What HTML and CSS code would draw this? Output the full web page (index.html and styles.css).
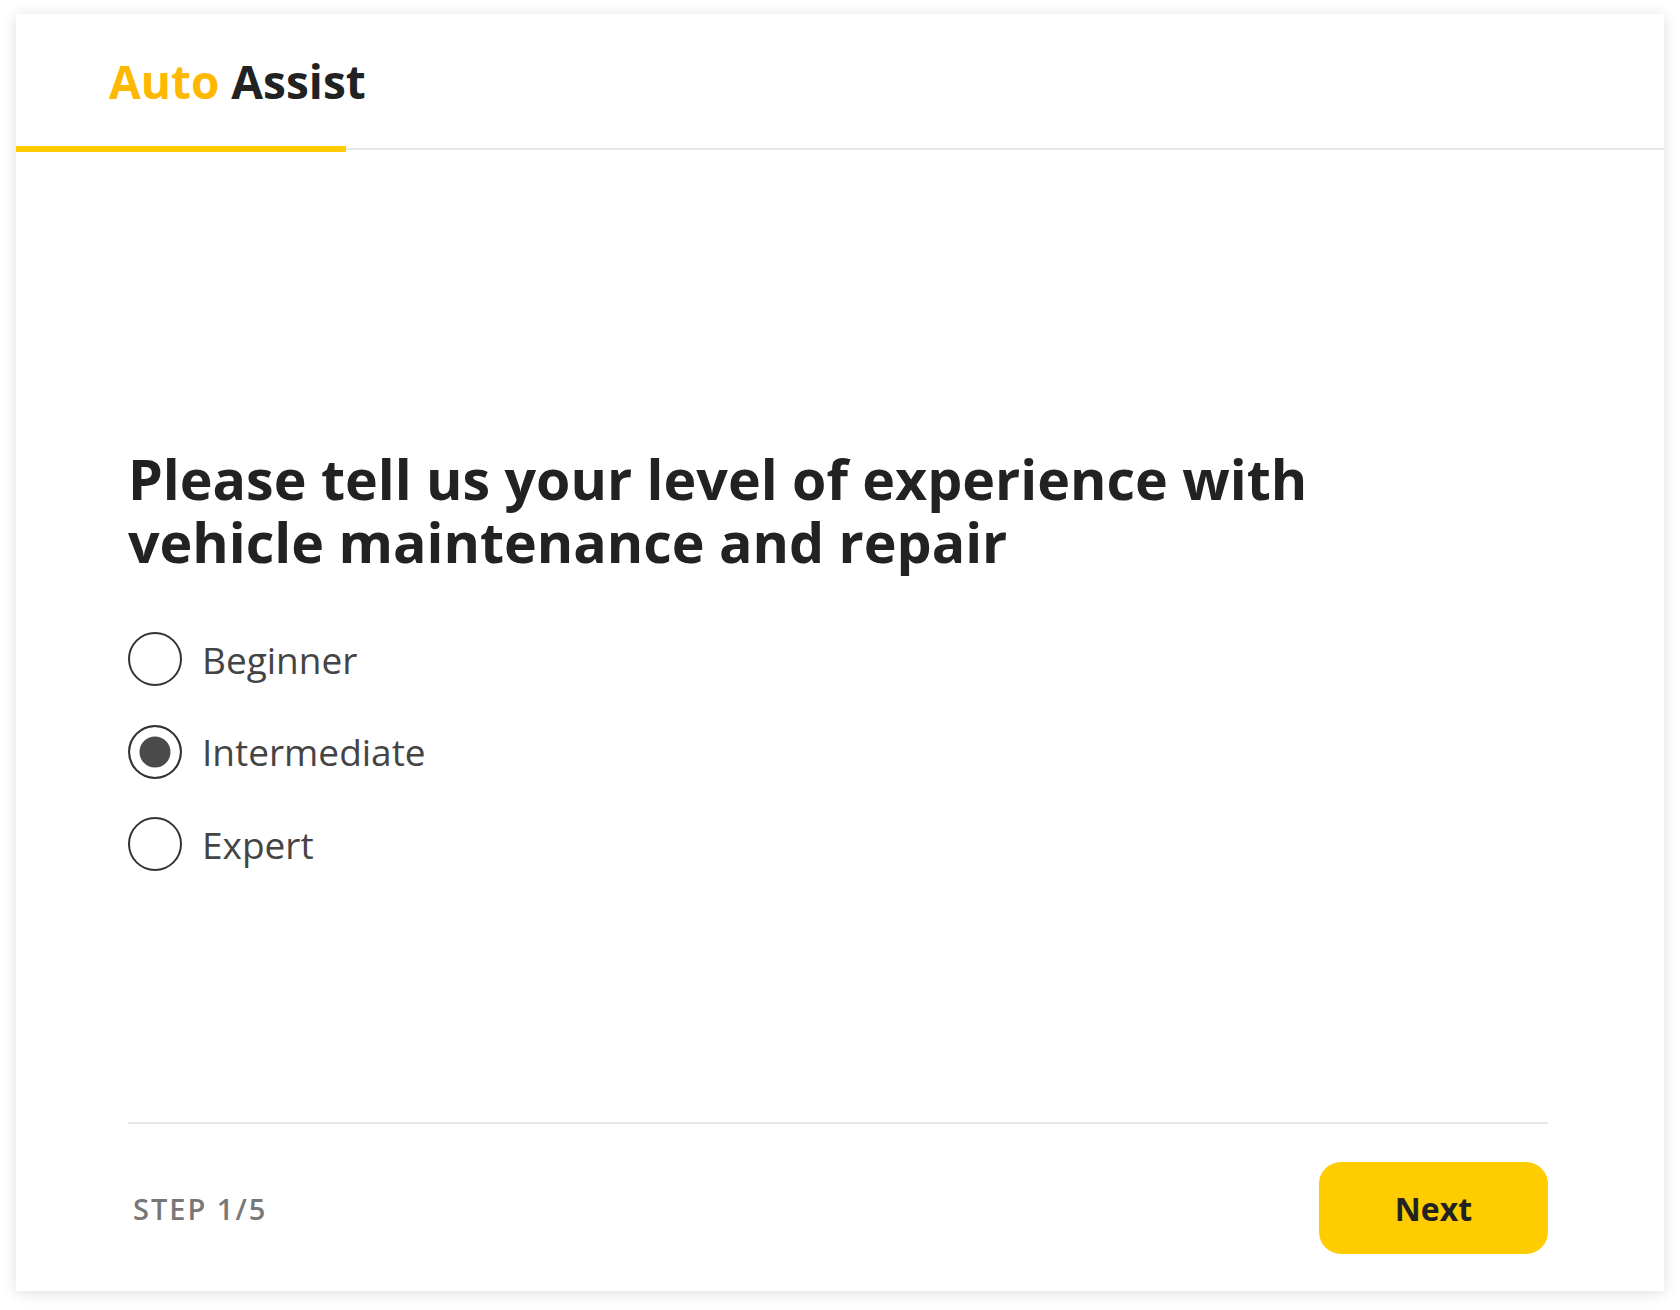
FILE: index.html
```html
<!DOCTYPE html>
<html lang="en">
<head>
<meta charset="utf-8">
<title>Auto Assist</title>
<link rel="stylesheet" href="styles.css">
</head>
<body>
<div class="card">
  <header class="header">
    <div class="logo"><span class="logo-accent">Auto</span> Assist</div>
    <div class="progress" style="width: 20%"></div>
  </header>
  <main class="main">
    <h1 class="question">Please tell us your level of experience with vehicle maintenance and repair</h1>
    <div class="options">
      <label class="option"><input type="radio" name="level" class="radio"><span class="option-label">Beginner</span></label>
      <label class="option"><input type="radio" name="level" class="radio" checked><span class="option-label">Intermediate</span></label>
      <label class="option"><input type="radio" name="level" class="radio"><span class="option-label">Expert</span></label>
    </div>
  </main>
  <footer class="footer">
    <div class="step">STEP 1/5</div>
    <button class="next" type="button">Next</button>
  </footer>
</div>
</body>
</html>
```
FILE: styles.css
```css
* { box-sizing: border-box; }
html, body { margin: 0; background: #fff; }
body {
  padding: 14px 16px 19px 16px;
  font-family: "Open Sans", "Noto Sans", sans-serif;
}
.card {
  width: 1648px;
  height: 1277px;
  background: #fff;
  box-shadow: 0 2px 14px rgba(0,0,0,0.13);
  display: flex;
  flex-direction: column;
}
.header {
  position: relative;
  height: 136px;
  border-bottom: 2px solid #e8e8e8;
  display: flex;
  align-items: center;
  padding-left: 93px;
}
.logo {
  font-size: 46px;
  font-weight: 700;
  color: #222;
  line-height: 1.362;
}
.logo-accent { color: #ffb800; }
.progress {
  position: absolute;
  left: 0;
  bottom: -4px;
  height: 6px;
  background: #ffcc00;
}
.main {
  flex: 1;
  padding: 298px 116px 0 112px;
  display: flex;
  flex-direction: column;
}
.question {
  margin: 0;
  font-size: 55.5px;
  line-height: 62.5px;
  font-weight: 700;
  color: #222;
  max-width: 1200px;
}
.options {
  margin-top: 59px;
  display: flex;
  flex-direction: column;
  gap: 38.5px;
}
.option {
  display: flex;
  align-items: center;
  gap: 20px;
  height: 54px;
  cursor: pointer;
}
.radio {
  appearance: none;
  -webkit-appearance: none;
  margin: 0;
  width: 54px;
  height: 54px;
  border: 2px solid #333;
  border-radius: 50%;
  background: #fff;
  flex: none;
}
.radio:checked {
  background: #4a4a4a;
  box-shadow: inset 0 0 0 9.5px #fff;
}
.option-label {
  font-size: 37px;
  color: #444;
}
.footer {
  margin: 0 116px 0 112px;
  border-top: 2px solid #e8e8e8;
  padding: 38px 0 37px 0;
  display: flex;
  align-items: center;
  justify-content: space-between;
}
.step {
  padding-left: 5px;
  font-size: 29px;
  font-weight: 600;
  letter-spacing: 2px;
  color: #777;
}
.next {
  width: 229px;
  height: 92px;
  border: none;
  border-radius: 22px;
  background: #ffcc00;
  font-family: "Open Sans", "Noto Sans", sans-serif;
  font-size: 32px;
  font-weight: 700;
  color: #222;
  cursor: pointer;
}
```
